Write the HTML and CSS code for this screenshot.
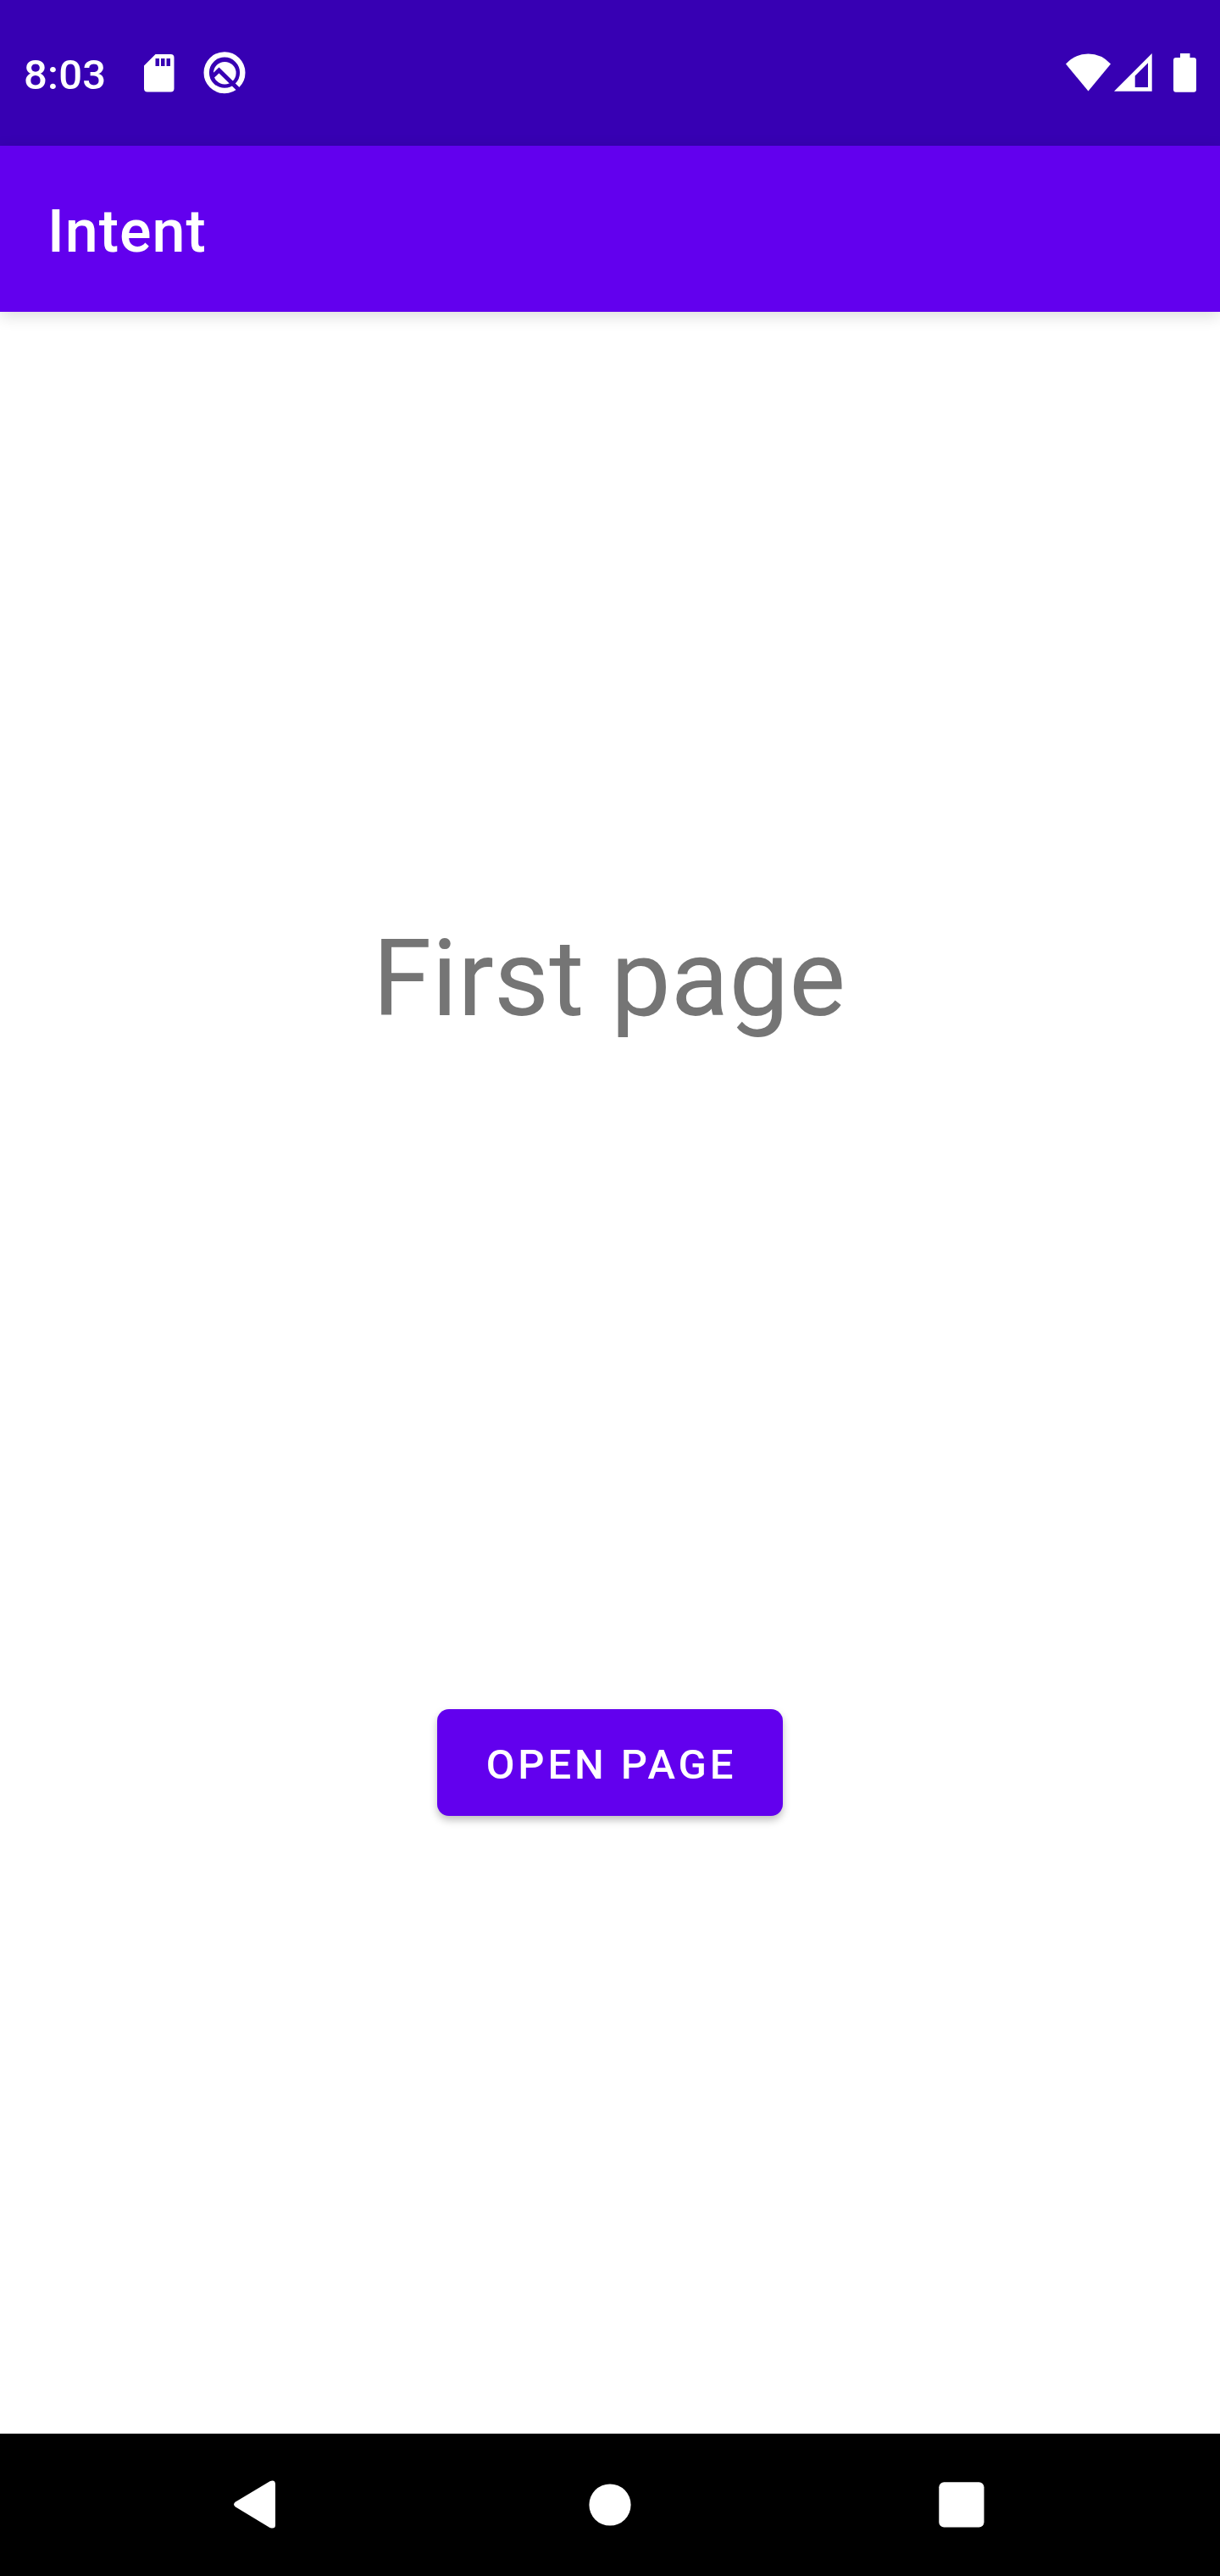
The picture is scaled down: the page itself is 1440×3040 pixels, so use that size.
FILE: index.html
```html
<!DOCTYPE html>
<html lang="en">
<head>
<meta charset="utf-8">
<title>Intent</title>
<link rel="stylesheet" href="styles.css">
</head>
<body>
<div class="screen">
  <header class="status-bar">
    <div class="status-group">
      <span class="clock">8:03</span>
      <svg class="icon-sd" width="36" height="45" viewBox="0 0 36 45"><path fill="#fff" fill-rule="evenodd" d="M13.500 0H31.500Q35.500 0 35.500 4V40.500Q35.500 44.500 31.500 44.500H4Q0 44.500 0 40.500V13.500ZM13.500 5V14H18V5ZM20 5V14H24.500V5ZM26.500 5V14H31V5Z"/></svg>
      <svg class="icon-q" width="50" height="50" viewBox="0 0 50 50">
        <circle cx="25" cy="24.700" r="21.300" fill="none" stroke="#fff" stroke-width="6.400"/>
        <circle cx="25.300" cy="25.200" r="13.300" fill="#fff"/>
        <path d="M10 30L18.500 22L42 45" fill="none" stroke="#3700b3" stroke-width="5"/>
      </svg>
    </div>
    <div class="status-group">
      <svg class="icon-wifi" width="54" height="46" viewBox="0 0 54 46"><path fill="#fff" d="M0 12.500Q11 .5 26.500 .5T53 12.500L26.500 44.500Z"/></svg>
      <svg class="icon-signal" width="46" height="46" viewBox="0 0 46 46"><path fill="#fff" fill-rule="evenodd" d="M0 44.700L44.700 0V44.700ZM24.700 26.500V40H40V11.200Z"/></svg>
      <svg width="27" height="46" viewBox="0 0 27 46"><path fill="#fff" d="M8 0H19.500V5H24Q27 5 27 8V42.700Q27 45.700 24 45.700H3Q0 45.700 0 42.700V8Q0 5 3 5H8Z"/></svg>
    </div>
  </header>
  <div class="app-bar"><h1 class="app-title">Intent</h1></div>
  <main class="content">
    <p class="page-label">First page</p>
    <button class="open-button" type="button">OPEN PAGE</button>
  </main>
  <nav class="nav-bar">
    <svg width="50" height="58" viewBox="0 0 50 58"><path fill="#fff" d="M2 25.500L42.500 1.200Q49 -1 49 5V53Q49 58 42.500 56L2 31.500Q-2 28.500 2 25.500Z"/></svg>
    <svg class="nav-home" width="50" height="50" viewBox="0 0 50 50"><circle cx="25" cy="25" r="24.600" fill="#fff"/></svg>
    <svg width="54" height="54" viewBox="0 0 54 54"><rect x=".3" y=".3" width="53.200" height="53.200" rx="6" fill="#fff"/></svg>
  </nav>
</div>
</body>
</html>
```
FILE: styles.css
```css
body {
  margin: 0;
  font-family: Roboto, sans-serif;
  background: #fff;
}

.screen {
  display: flex;
  flex-direction: column;
  width: 1440px;
  height: 3040px;
  overflow: hidden;
}

.status-bar {
  display: flex;
  justify-content: space-between;
  box-sizing: border-box;
  height: 172px;
  padding: 0 28px;
  background: #3700b3;
}

.status-group {
  display: flex;
  align-items: center;
  height: 172px;
}

.clock {
  padding-top: 6px;
  font-size: 49px;
  font-weight: 500;
  line-height: 58px;
  letter-spacing: 0.25px;
  color: #fff;
}

.icon-sd {
  margin-left: 45px;
}

.icon-q {
  margin-left: 34px;
}

.icon-signal {
  margin: 0 24px 0 3px;
}

.app-bar {
  display: flex;
  align-items: center;
  box-sizing: border-box;
  height: 196px;
  padding: 6px 56px 0;
  background: #6200ee;
  box-shadow: 0 5px 18px rgba(0, 0, 0, 0.14);
}

.app-title {
  margin: 0;
  font-size: 70px;
  font-weight: 500;
  line-height: 82px;
  letter-spacing: 1px;
  color: #fff;
}

.content {
  display: flex;
  flex: 1;
  flex-direction: column;
  align-items: center;
  padding-top: 713px;
}

.page-label {
  margin: 0;
  padding-right: 2px;
  font-size: 126px;
  line-height: 148px;
  letter-spacing: 0.1px;
  color: #757575;
}

.open-button {
  box-sizing: border-box;
  width: 408px;
  height: 126px;
  margin-top: 788px;
  padding: 6px 0 0 3px;
  border: 0;
  border-radius: 14px;
  background: #6200ee;
  box-shadow: 0 5px 10px rgba(0, 0, 0, 0.25);
  font-family: inherit;
  font-size: 49px;
  font-weight: 500;
  line-height: 58px;
  letter-spacing: 3.9px;
  color: #fff;
}

.nav-bar {
  display: flex;
  align-items: center;
  justify-content: space-between;
  box-sizing: border-box;
  height: 168px;
  padding: 0 278px 0 276px;
  background: #000;
}

.nav-home {
  margin-left: 6px;
}
```
